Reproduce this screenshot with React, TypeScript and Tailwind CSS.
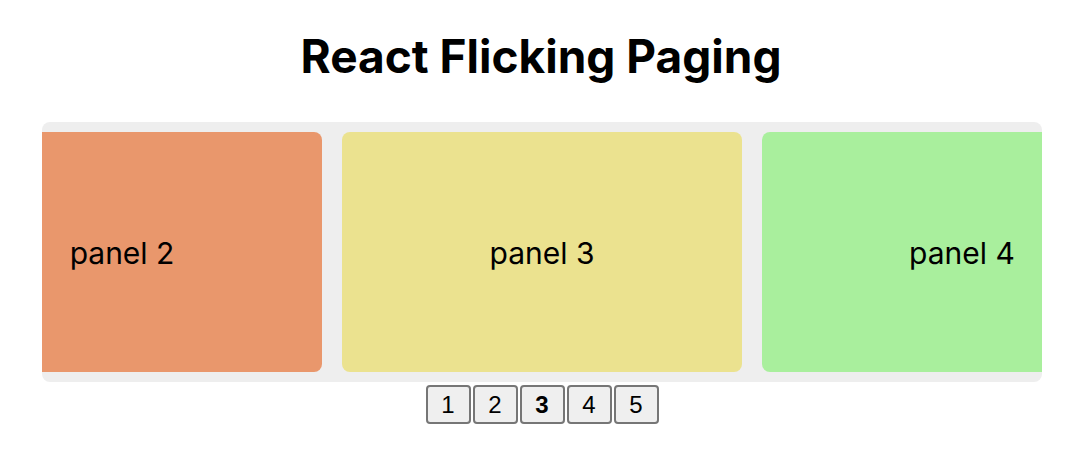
const panels = [
  { label: 'panel 2', color: 'bg-[#e9976c]' },
  { label: 'panel 3', color: 'bg-[#ebe28f]' },
  { label: 'panel 4', color: 'bg-[#a9ef9d]' },
];

export default function App() {
  const current = 3;
  return (
    <div className="flex min-h-[470px] flex-col items-center bg-white pt-[26px] font-['Inter',sans-serif] text-black">
      <h1 className="text-[46px] font-bold leading-[60px]">React Flicking Paging</h1>
      <div className="mt-[36px] ml-[2px] w-[1000px] overflow-hidden rounded-lg bg-[#eeeeee] py-[10px]">
        <div className="ml-[-120px] flex gap-5">
          {panels.map((panel) => (
            <div key={panel.label} className={`flex h-[240px] w-[400px] shrink-0 items-center justify-center rounded-lg pt-[3px] text-[30px] ${panel.color}`}>
              {panel.label}
            </div>
          ))}
        </div>
      </div>
      <div className="mt-[3px] ml-[2px] flex gap-[2px] font-['Liberation_Sans',sans-serif]">
        {[1, 2, 3, 4, 5].map((page) => (
          <button
            key={page}
            type="button"
            className={`h-[39px] w-[45px] rounded-[4px] border-2 border-[#767676] bg-[#efefef] text-[24px] ${page === current ? 'font-bold' : ''}`}
          >
            {page}
          </button>
        ))}
      </div>
    </div>
  );
}
